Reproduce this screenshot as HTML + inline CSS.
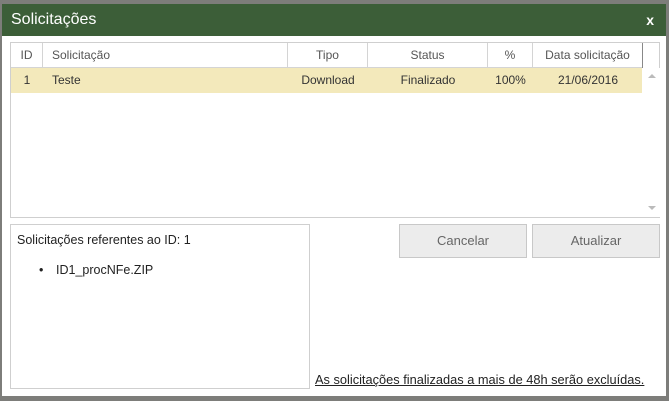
<!DOCTYPE html>
<html><head><meta charset="utf-8"><style>
*{box-sizing:border-box;margin:0;padding:0}
body{width:669px;height:401px;background:#7d7d7a;font-family:"Liberation Sans",sans-serif;position:relative;overflow:hidden;color:#222;font-size:12px}
.dlg{position:absolute;left:2px;top:4px;width:664px;height:392px;background:#fff}
.hdr{position:absolute;left:0;top:0;width:664px;height:32px;background:#3c5e38;color:#fff}
.hdr .t{position:absolute;left:9px;top:7px;font-size:16px}
.hdr .x{position:absolute;right:12px;top:8px;font-size:14px;font-weight:bold}
.tbl{position:absolute;left:8px;top:38px;width:650px;height:176px;border:1px solid #cfcfcf}
.row{position:absolute;left:0;height:25px;width:631px}
.c{position:absolute;top:0;height:25px;line-height:25px;font-size:12px;color:#333}
.h .c{border-right:1px solid #d4d4d4;color:#555}
.sb{position:absolute;left:632px;top:25px;width:17px;height:149px;background:#fff}
.left{position:absolute;left:8px;top:220px;width:300px;height:165px;border:1px solid #cfcfcf}
.btn{position:absolute;top:220px;height:34px;background:#ececec;border:1px solid #c8c8c8;color:#666;font-size:13px;text-align:center;line-height:32px}
</style></head><body>
<div class="dlg">
<div class="hdr"><span class="t">Solicitações</span><span class="x">x</span></div>
<div class="tbl">
<div class="row h" style="top:0;border-bottom:1px solid #d4d4d4;height:25px">
<div class="c" style="left:0;width:32px;text-align:center">ID</div>
<div class="c" style="left:32px;width:245px;padding-left:9px">Solicitação</div>
<div class="c" style="left:277px;width:80px;text-align:center">Tipo</div>
<div class="c" style="left:357px;width:120px;text-align:center">Status</div>
<div class="c" style="left:477px;width:45px;text-align:center">%</div>
<div class="c" style="left:522px;width:110px;text-align:center;border-right:1px solid #888">Data solicitação</div>
</div>
<div class="row" style="top:25px;background:#f3e9bb">
<div class="c" style="left:0;width:32px;text-align:center">1</div>
<div class="c" style="left:32px;width:245px;padding-left:9px">Teste</div>
<div class="c" style="left:277px;width:80px;text-align:center">Download</div>
<div class="c" style="left:357px;width:120px;text-align:center">Finalizado</div>
<div class="c" style="left:477px;width:45px;text-align:center">100%</div>
<div class="c" style="left:522px;width:110px;text-align:center">21/06/2016</div>
</div>
<div class="sb"><div style="position:absolute;left:5px;top:6px;border:4px solid transparent;border-bottom-color:#bbb;border-top:0"></div><div style="position:absolute;left:5px;top:138px;border:4px solid transparent;border-top-color:#bbb;border-bottom:0"></div></div>
</div>
<div class="left">
<div style="position:absolute;left:6px;top:8px;font-size:12.5px">Solicitações referentes ao ID: 1</div>
<div style="position:absolute;left:28px;top:38px;font-size:12.5px">•</div>
<div style="position:absolute;left:45px;top:38px;font-size:12.5px">ID1_procNFe.ZIP</div>
</div>
<div class="btn" style="left:397px;width:128px">Cancelar</div>
<div class="btn" style="left:530px;width:128px">Atualizar</div>
<div style="position:absolute;left:313px;top:368px;font-size:12.8px;text-decoration:underline;color:#222">As solicitações finalizadas a mais de 48h serão excluídas.</div>
</div>
</body></html>
